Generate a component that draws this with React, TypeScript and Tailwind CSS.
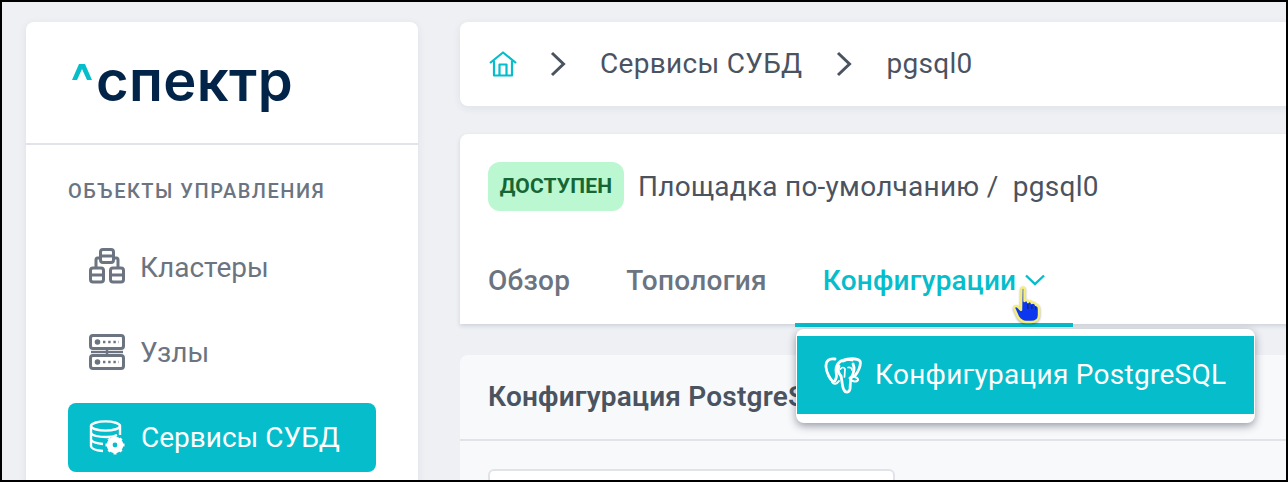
import React from "react";

const Chevron = ({ className }: { className?: string }) => (
  <svg className={className} width="16" height="26" viewBox="0 0 16 26" fill="none" stroke="currentColor" strokeWidth="3">
    <path d="M2 2 L13.5 13 L2 24" />
  </svg>
);

const HomeIcon = () => (
  <svg width="28" height="26" viewBox="0 0 28 26" fill="none" stroke="#05bdcb" strokeWidth="2.2" strokeLinejoin="round">
    <path d="M1 12 L14 1.5 L27 12" />
    <path d="M5 9.5 V24.5 H23 V9.5" />
    <path d="M10.5 24.5 V13.5 H17.5 V24.5" />
  </svg>
);

const ClusterIcon = () => (
  <svg width="36" height="36" viewBox="0 0 36 36" fill="none" stroke="#6b7480" strokeWidth="3" className="-mt-[3px]">
    <rect x="11.5" y="1.5" width="13" height="13" rx="2.500" />
    <path d="M11.5 8 H24.5" />
    <path d="M11.5 10 H8.5 Q7 10 7 12 V20 M24.5 10 H27.5 Q29 10 29 12 V20" />
    <rect x="1.5" y="20" width="13" height="14" rx="2.5" />
    <path d="M1.5 27 H14.5" />
    <rect x="21.5" y="20" width="13" height="14" rx="2.5" />
    <path d="M21.5 27 H34.5" />
  </svg>
);

const NodeIcon = () => (
  <svg width="36" height="36" viewBox="0 0 36 36" fill="none" stroke="#6b7480" strokeWidth="3" className="-mt-[2px]">
    <rect x="1.5" y="1.5" width="33" height="13" rx="2.5" />
    <rect x="1.5" y="21.5" width="33" height="13" rx="2.5" />
    <path d="M18 14.5 V21.5" strokeWidth="2.4" />
    <path d="M2 18 H34" strokeWidth="2.4" />
    <circle cx="8.5" cy="8" r="2.8" fill="#6b7480" stroke="none" />
    <circle cx="8.5" cy="28" r="2.8" fill="#6b7480" stroke="none" />
    <path d="M14 8 H30 M14 28 H30" strokeWidth="2.4" strokeDasharray="2.4 2.8" />
  </svg>
);

const DbGearIcon = () => (
  <svg width="37" height="35" viewBox="0 0 37 35" fill="none" stroke="#fff" strokeWidth="2.4">
    <ellipse cx="16.5" cy="6" rx="14.5" ry="4.6" />
    <path d="M2 6 V26 Q2 30 14 31" />
    <path d="M31 6 V15" />
    <path d="M2 13 Q4 17 18 17 Q24 17 28 15" />
    <path d="M2 20 Q4 23 14 24" />
    <circle cx="26" cy="25" r="5.8" strokeWidth="5" />
    <path d="M26 15.5 V34.5 M16.500 25 H35.500 M19.500 18.500 L32.500 31.500 M32.500 18.500 L19.500 31.500" strokeWidth="3" />
    <circle cx="26" cy="25" r="2.4" fill="#05bdcb" stroke="none" />
  </svg>
);

const Elephant = () => (
  <svg width="38" height="37" viewBox="0 0 38 37" fill="none" stroke="#fff" strokeWidth="2.8" strokeLinecap="round" strokeLinejoin="round">
    <path d="M11 2 C5 1 1.5 4 2 10 C2.5 16 6 22 8.5 24 C10.5 25.5 12 23 12.5 19 L12 13 C12 9 14 6 17 4 C20 2.5 25 2 28 3" />
    <path d="M19 4 C24 1 33 1 36 4 C37.5 8 34 15 31.5 18 C30 20 28 20 26 21" />
    <path d="M15 9 C13.5 13 15 17 17 19 C18 22 18 30 20 33 C21.5 36 25 36 26 32 C26.5 28 26 24 27 21 C30 16 31 11 29 7" />
    <path d="M16.5 12 C18 10 20 10 21 12 L20.5 20 M24 10.5 C26 10 28 11 28 13" strokeWidth="1.7" />
    <path d="M8 25 C10 28 13 27 15 24" strokeWidth="2" />
    <path d="M31 20 C34 21 35 23 33 24 C31 25 28 24 27 23" strokeWidth="2" />
  </svg>
);

const Hand = () => (
  <svg width="30" height="38" viewBox="0 0 30 38" className="drop-shadow-[0_1px_1px_rgba(0,0,0,0.35)]">
    <path
      d="M9.5 3 C9.5 1 12.5 1 12.5 3 V15 C14 13.5 15.5 14 16 16 C17.5 14.5 19 15 19.8 17 C21.5 16 23.5 17 24 19 C26 19 27 20 27 23 V29 C27 33 24 36 19 36 H14 C10 36 8 34 6 31 L2.5 23 C1.5 20.5 4 19 6 21 L9 24 Z"
      fill="#0b37f0"
      stroke="#f6ee7a"
      strokeWidth="2.4"
      strokeLinejoin="round"
    />
    <path d="M15.8 18 V23 M19.8 19 V23 M23.6 20.5 V24" stroke="#26262e" strokeWidth="1.2" fill="none" />
  </svg>
);

const NavItem = ({ icon, label, active }: { icon: React.ReactNode; label: string; active?: boolean }) => (
  <div
    className={
      active
        ? "flex items-center h-[69px] rounded-lg bg-[#05bdcb] pl-[21px] gap-[15px] text-white text-[28px]"
        : "flex items-center h-[69px] pl-[21px] gap-[15px] text-[#6b7480] text-[28px]"
    }
  >
    {icon}
    <span>{label}</span>
  </div>
);

export default function App() {
  return (
    <div
      className="w-[1288px] h-[482px] overflow-hidden border-2 border-black bg-[#eef0f4] flex items-start pl-[24px] pt-[20px] gap-[42px]"
      style={{ fontFamily: "Roboto, 'Noto Sans', sans-serif" }}
    >
      <aside className="flex-none w-[392px] h-[600px] bg-white rounded-lg shadow-[0_2px_8px_rgba(40,50,70,0.08)]">
        <div className="h-[123px] border-b-2 border-[#e0e3e8] flex items-start pl-[46px] pt-[42px]">
          <svg width="20" height="16" viewBox="0 0 20 16" className="flex-none">
            <path d="M0 16 L7 0 H13 L20 16 H15 L10 5 L5 16 Z" fill="#05bdcb" />
          </svg>
          <span
            className="ml-[4px] -mt-[3px] text-[56px] leading-[40px] font-semibold text-[#022449] tracking-[0.4px]"
            style={{ fontFamily: "Inter, sans-serif" }}
          >
            спектр
          </span>
        </div>
        <div className="px-[42px] pt-[34px]">
          <div className="text-[20px] leading-[24px] font-medium tracking-[1.5px] text-[#6b7480]">ОБЪЕКТЫ УПРАВЛЕНИЯ</div>
          <div className="mt-[30px] flex flex-col gap-[16px]">
            <NavItem icon={<ClusterIcon />} label="Кластеры" />
            <NavItem icon={<NodeIcon />} label="Узлы" />
            <NavItem icon={<DbGearIcon />} label="Сервисы СУБД" active />
          </div>
        </div>
      </aside>

      <main className="flex-none w-[860px] flex flex-col">
        <div className="h-[84px] bg-white rounded-l-lg shadow-[0_2px_8px_rgba(40,50,70,0.08)] flex items-center pl-[29px] text-[#4b5360] text-[28px] tracking-[0.3px]">
          <HomeIcon />
          <Chevron className="ml-[33px]" />
          <span className="ml-[34px]">Сервисы СУБД</span>
          <Chevron className="ml-[34px]" />
          <span className="ml-[34px]">pgsql0</span>
        </div>

        <div className="relative mt-[28px] h-[190px] bg-white rounded-tl-lg shadow-[0_2px_4px_rgba(40,50,70,0.16)]">
          <div className="flex items-center pl-[28px] pt-[28px]">
            <span className="h-[49px] w-[136px] flex items-center justify-center rounded-xl bg-[#bbf7d0] text-[#166534] text-[21px] font-bold tracking-[0.2px]">
              ДОСТУПЕН
            </span>
            <span className="ml-[14px] text-[28px] text-[#4b5360] tracking-[0.25px] whitespace-pre">Площадка по-умолчанию /  pgsql0</span>
          </div>
          <div className="absolute left-0 bottom-[-3px] flex h-[86px] text-[28px] font-medium">
            <div className="px-[28px] pt-[19px] text-[#6b7480] tracking-[0.25px]">Обзор</div>
            <div className="px-[28px] pt-[19px] text-[#6b7480] tracking-[0.3px]">Топология</div>
            <div className="relative px-[28px] pt-[19px] text-[#05bdcb] border-b-4 border-[#05bdcb] flex items-start gap-[9px] tracking-[0.2px]">
              <span>Конфигурации</span>
              <svg width="20" height="12" viewBox="0 0 20 12" fill="none" stroke="#05bdcb" strokeWidth="2.4" className="mt-[14px]">
                <path d="M1 1.500 L10 10 L19 1.500" />
              </svg>
              <div className="absolute left-[217px] top-[45px]">
                <Hand />
              </div>
            </div>
          </div>

          <div className="absolute left-[336px] top-[195px] z-10 w-[459px] h-[94px] rounded-lg bg-white shadow-[0_3px_8px_rgba(30,40,60,0.45)] py-[7px] px-[1px]">
            <div className="h-[78px] bg-[#05bdcb] flex items-center pl-[27px] gap-[13px] text-white text-[28px] tracking-[0.27px]">
              <Elephant />
              <span>Конфигурация PostgreSQL</span>
            </div>
          </div>
        </div>

        <div className="mt-[31px] h-[200px] bg-[#f8f9fb] rounded-tl-lg">
          <div className="h-[86px] border-b-2 border-[#e0e3e8] flex items-center pl-[28px] text-[28px] font-semibold text-[#4b5360] tracking-[0.2px]">
            Конфигурация PostgreSQL
          </div>
          <div className="ml-[28px] mt-[28px] w-[407px] h-[60px] bg-white border-2 border-[#e0e3e8] rounded-md" />
        </div>
      </main>
    </div>
  );
}
